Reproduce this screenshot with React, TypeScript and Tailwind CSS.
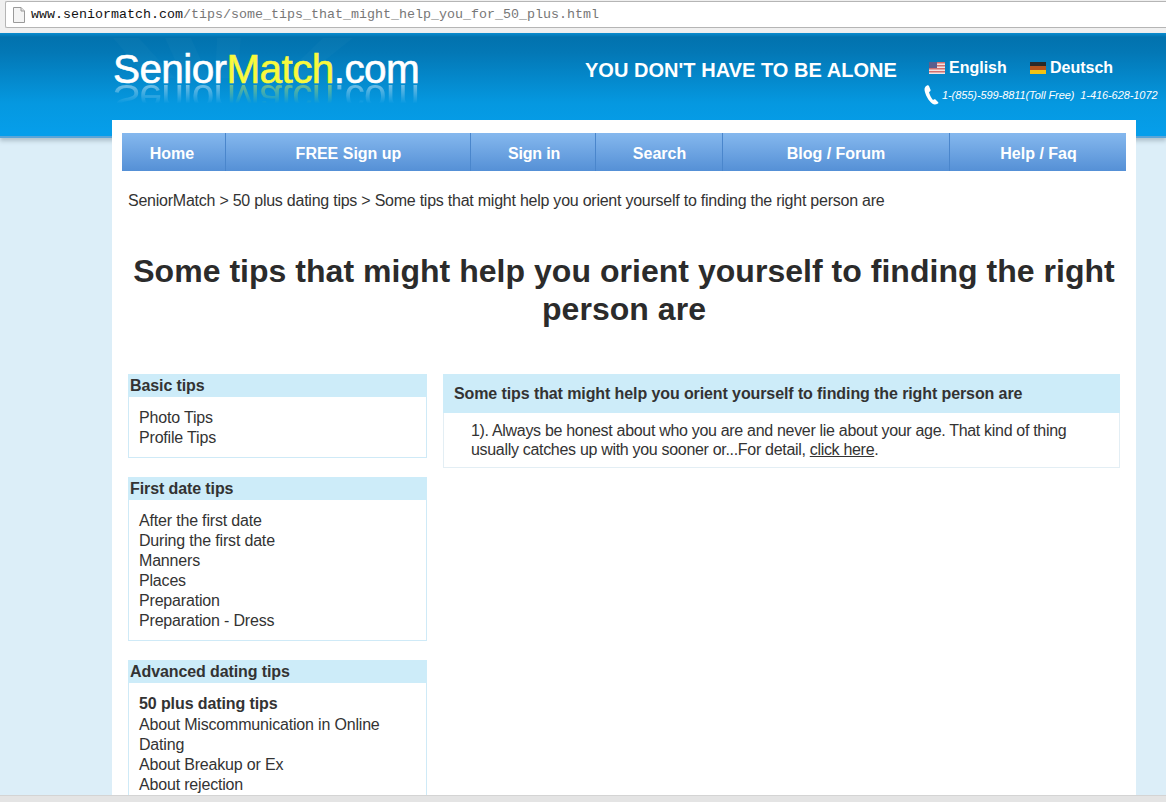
import { Fragment } from "react";

const font = "font-['Liberation_Sans',Arial,sans-serif]";

const navItems = [
  { label: "Home", width: "w-[104px]", nudge: "pr-[3px]" },
  { label: "FREE Sign up", width: "w-[245px]", nudge: "pl-[1px]" },
  { label: "Sign in", width: "w-[125px]", nudge: "pl-[2px] tracking-[-0.2px]" },
  { label: "Search", width: "w-[127px]", nudge: "pl-[1px]" },
  { label: "Blog / Forum", width: "w-[227px]", nudge: "" },
  { label: "Help / Faq", width: "flex-1", nudge: "pl-[1px]" },
];

function PageIcon() {
  return (
    <svg width="12" height="16" viewBox="0 0 12 16" className="shrink-0">
      <path d="M0.5 0.5H8L11.5 4V15.5H0.5Z" fill="#f4f4f4" stroke="#9a9a9a" />
      <path d="M8 0.5V4H11.5" fill="#e2e2e2" stroke="#9a9a9a" />
    </svg>
  );
}

function UsFlag() {
  return (
    <svg width="16" height="12" viewBox="0 0 16 12" className="shrink-0">
      <rect width="16" height="12" fill="#f3e3e3" />
      <rect y="0" width="16" height="1.5" fill="#d0706f" />
      <rect y="3" width="16" height="1.5" fill="#d0706f" />
      <rect y="6" width="16" height="1.5" fill="#d0706f" />
      <rect y="9" width="16" height="1.5" fill="#d0706f" />
      <rect width="8" height="6" fill="#5a5f8e" />
    </svg>
  );
}

function DeFlag() {
  return (
    <svg width="16" height="12" viewBox="0 0 16 12" className="shrink-0">
      <rect width="16" height="4" fill="#2a2a2a" />
      <rect y="4" width="16" height="4" fill="#b5541c" />
      <rect y="8" width="16" height="4" fill="#f2c313" />
    </svg>
  );
}

function PhoneIcon() {
  return (
    <svg width="15" height="20" viewBox="0 0 15 20" className="shrink-0">
      <path
        d="M3 0.5C1.2 1.5 0.2 3 0.6 5.5C1.2 9.5 4.5 16 8.5 18.8C10 19.8 12 19.6 14 18.5C14.6 18.1 14.5 17.5 14 17L11.5 14.5C11 14 10.4 14 9.8 14.5L9 15C7.2 13 5.5 9.5 5 7L6 6.4C6.6 6 6.7 5.4 6.5 4.8L5 0.9C4.7 0.3 3.8 0.1 3 0.5Z"
        fill="#ffffff"
      />
    </svg>
  );
}

function LogoRays() {
  return (
    <svg width="270" height="40" viewBox="0 0 270 40" className="absolute left-0 -top-[16px]">
      <path d="M0 0H26L62 40H34Z M52 0H78L96 40H70Z M104 0H128L124 40H102Z M210 0H240L190 40H168Z" fill="#ffffff" opacity="0.025" />
    </svg>
  );
}

function Logo() {
  const word = (
    <Fragment>
      Senior<span className="text-[#f8f93d]">Match</span>.com
    </Fragment>
  );
  return (
    <div className="relative mt-[8px] w-[306px] h-[30px]">
      <LogoRays />
      <div className="relative text-[40.5px] leading-[30px] tracking-[-0.6px] text-white whitespace-nowrap [-webkit-text-stroke:0.6px_currentColor]">
        {word}
      </div>
      <div
        aria-hidden="true"
        className="absolute left-0 top-[30px] text-[40.5px] leading-[30px] tracking-[-0.6px] text-white whitespace-nowrap -scale-y-100 opacity-45 [mask-image:linear-gradient(to_top,black,transparent_65%)]"
      >
        {word}
      </div>
    </div>
  );
}

function SideBox({ title, className, children }: { title: string; className: string; children: React.ReactNode }) {
  return (
    <div className={`border border-[#cfeaf7] border-t-0 ${className}`}>
      <div className="-mx-px bg-[#cdecf9] h-[23px] pl-[2px] text-[16px] leading-[23px] font-bold tracking-[-0.1px] text-[#333]">
        {title}
      </div>
      {children}
    </div>
  );
}

function Links({ items }: { items: string[] }) {
  return (
    <ul className="pl-[10px] text-[16px] leading-[20px] tracking-[-0.18px] text-[#333]">
      {items.map((item) => (
        <li key={item}>{item}</li>
      ))}
    </ul>
  );
}

export default function App() {
  return (
    <div className={`${font} relative h-[802px] w-[1166px] overflow-hidden bg-[#dceef8]`}>
      {/* browser address bar */}
      <div className="h-[33px] bg-[#f0f0f0] pt-[1px] px-[5px]">
        <div className="h-[27px] -mr-[5px] bg-white border-y border-[#b5b5b5] border-l rounded-l-[2px] flex items-center gap-[6px] pl-[7px]">
          <PageIcon />
          <div className="font-['Liberation_Mono',monospace] text-[13.33px] pt-[1px] whitespace-nowrap text-[#777]">
            <span className="text-[#111]">www.seniormatch.com</span>/tips/some_tips_that_might_help_you_for_50_plus.html
          </div>
        </div>
      </div>

      {/* header */}
      <div className="h-[105px] border-b-2 border-[#5ba5d8] bg-[linear-gradient(to_bottom,#0a8dd0_0px,#0272ae_4px,#0378b6_20px,#0598e0_70px,#069eea_100px)] shadow-[0_3px_4px_rgba(120,140,150,0.45)]">
        <div className="flex pl-[113px] pt-[13px]">
          <Logo />
          <div className="ml-[166px] mt-[12px] w-[344px] text-[20px] leading-[24px] font-bold tracking-[0.03px] text-white whitespace-nowrap">
            YOU DON'T HAVE TO BE ALONE
          </div>
          <div className="text-white">
            <div className="mt-[12px] flex items-center h-[20px] text-[16px] font-bold">
              <span className="flex items-center gap-[4px] w-[101px]">
                <UsFlag />
                English
              </span>
              <span className="flex items-center gap-[4px]">
                <DeFlag />
                Deutsch
              </span>
            </div>
            <div className="-ml-[5px] mt-[7px] flex items-center gap-[3px] w-[240px] text-[11px] italic tracking-[-0.08px] whitespace-pre">
              <PhoneIcon />
              <span>1-(855)-599-8811(Toll Free)  1-416-628-1072</span>
            </div>
          </div>
        </div>
      </div>

      {/* page */}
      <div className="relative ml-[112px] -mt-[18px] w-[1024px] bg-white px-[10px] pt-[13px] h-[700px] overflow-hidden">
        <div className="flex h-[38px] bg-[linear-gradient(to_bottom,#85b8ee,#5590d6)]">
          {navItems.map((item, i) => (
            <div
              key={item.label}
              className={`${item.width} ${item.nudge} ${
                i < navItems.length - 1 ? "border-r border-r-[#4a86cc]" : ""
              } flex items-center justify-center pt-[3px] text-[16px] font-bold text-white`}
            >
              {item.label}
            </div>
          ))}
        </div>

        <div className="mt-[21px] px-[6px] text-[16px] leading-[18px] tracking-[-0.24px] text-[#333]">
          SeniorMatch &gt; 50 plus dating tips &gt; Some tips that might help you orient yourself to finding the right person are
        </div>

        <h1 className="mt-[42px] text-center text-[32px] leading-[38px] font-bold tracking-[0.03px] text-[#2b2b2b]">
          Some tips that might help you orient yourself to finding the right person are
        </h1>

        <div className="mt-[46px] flex items-start px-[6px] gap-[16px]">
          <div className="w-[299px] shrink-0">
            <SideBox title="Basic tips" className="pb-[9px]">
              <div className="pt-[11px]">
                <Links items={["Photo Tips", "Profile Tips"]} />
              </div>
            </SideBox>

            <SideBox title="First date tips" className="mt-[19px] pb-[9px]">
              <div className="pt-[11px]">
                <Links
                  items={[
                    "After the first date",
                    "During the first date",
                    "Manners",
                    "Places",
                    "Preparation",
                    "Preparation - Dress",
                  ]}
                />
              </div>
            </SideBox>

            <SideBox title="Advanced dating tips" className="mt-[19px] pb-[10px]">
              <div className="pt-[11px] pl-[10px] text-[16px] leading-[20px] font-bold tracking-[-0.1px] text-[#333]">
                50 plus dating tips
              </div>
              <div className="mt-[1px] pr-[30px]">
                <Links
                  items={[
                    "About Miscommunication in Online Dating",
                    "About Breakup or Ex",
                    "About rejection",
                  ]}
                />
              </div>
            </SideBox>
          </div>

          <div className="flex-1 border border-[#e3eef4] border-t-0">
            <div className="-mx-px bg-[#cdecf9] h-[39px] pl-[11px] text-[16px] leading-[39px] font-bold tracking-[-0.1px] text-[#333]">
              Some tips that might help you orient yourself to finding the right person are
            </div>
            <p className="px-[27px] pt-[8px] pb-[8px] text-[16px] leading-[19px] tracking-[-0.31px] text-[#333]">
              1). Always be honest about who you are and never lie about your age. That kind of thing usually catches up with you sooner or...For detail,{" "}
              <a href="#" className="underline">click here</a>.
            </p>
          </div>
        </div>
      </div>

      {/* bottom window edge */}
      <div className="absolute bottom-0 left-0 right-0 h-[7px] bg-[#e4e4e4] border-t border-[#d4d4d4]" />
    </div>
  );
}
